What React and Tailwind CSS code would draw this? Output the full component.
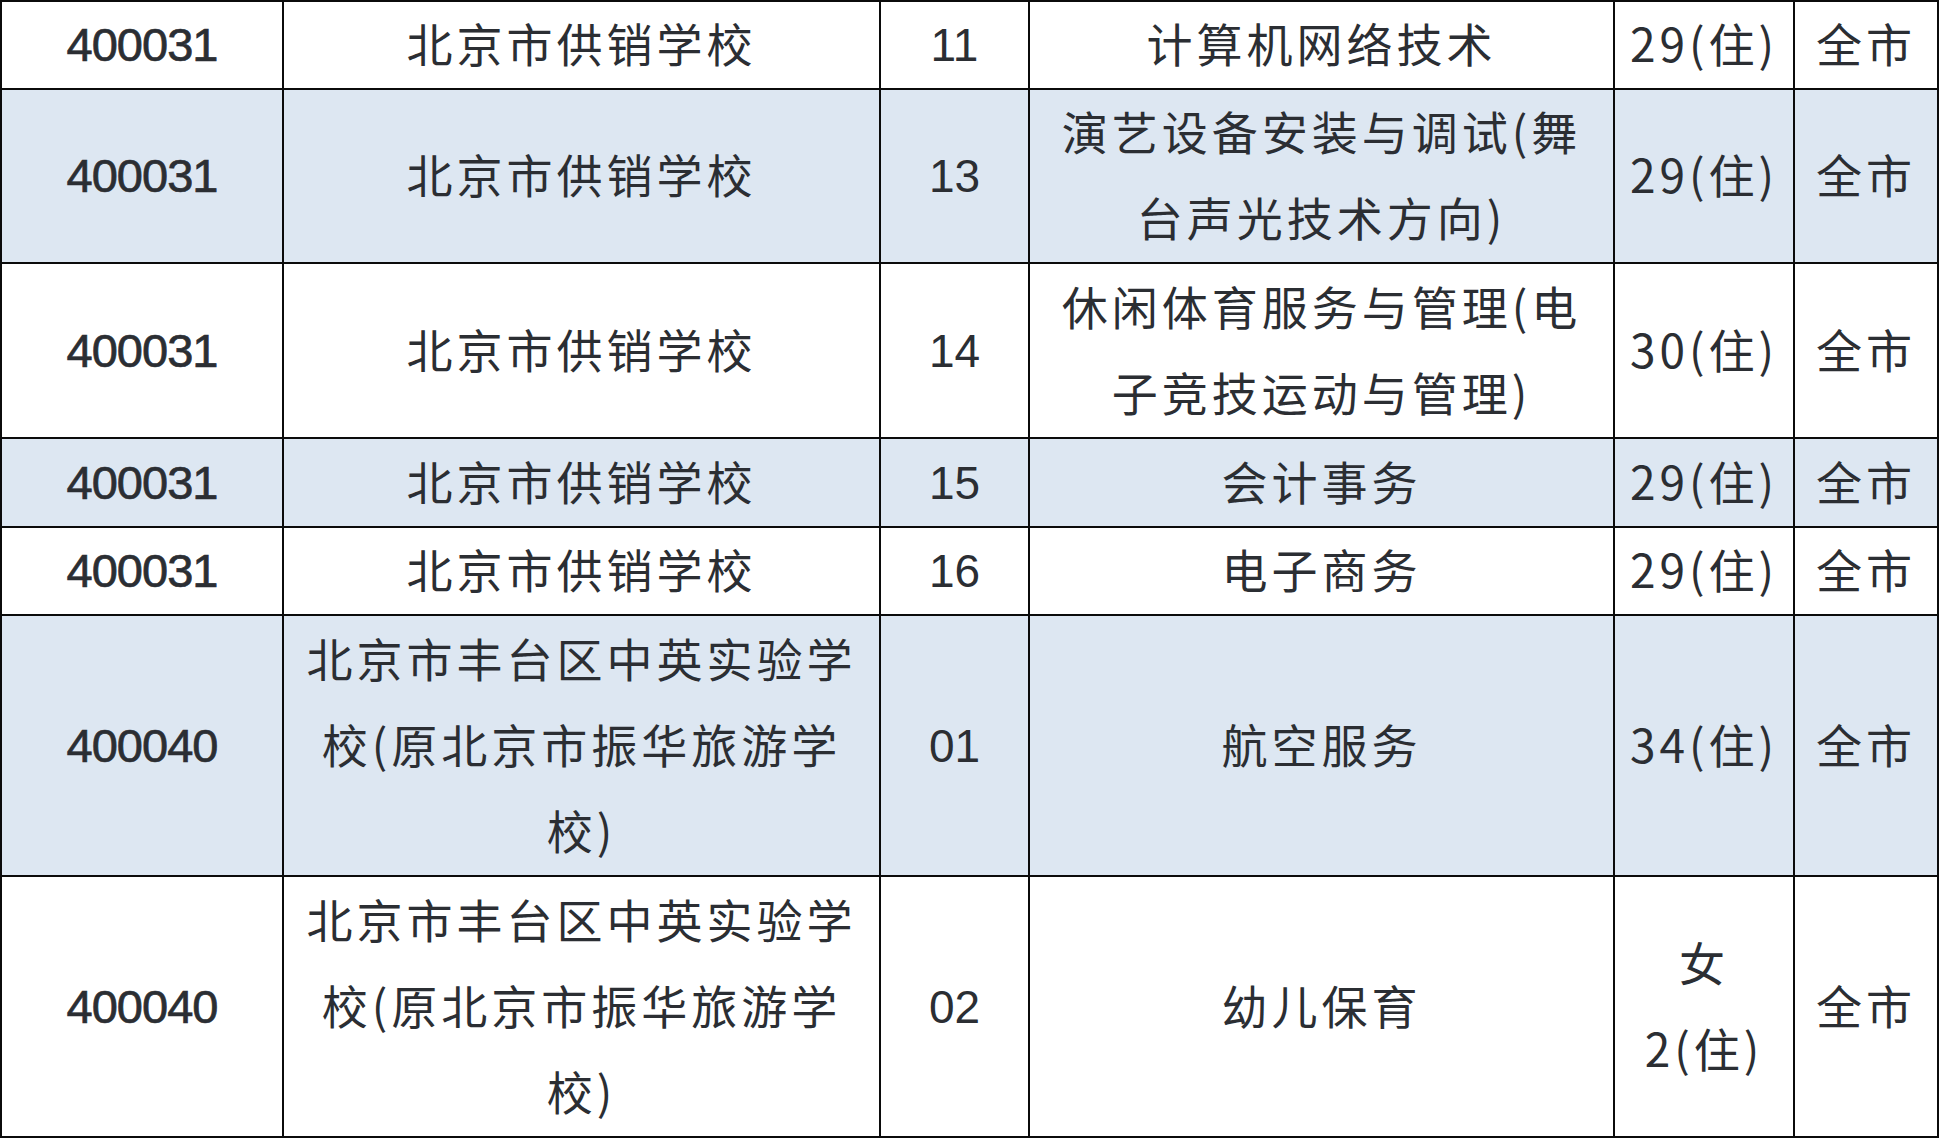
const rows = [
	{ code: "400031", school: ["北京市供销学校"], no: "11", major: ["计算机网络技术"], plan: ["29(住)"], area: "全市" },
	{ code: "400031", school: ["北京市供销学校"], no: "13", major: ["演艺设备安装与调试(舞", "台声光技术方向)"], plan: ["29(住)"], area: "全市" },
	{ code: "400031", school: ["北京市供销学校"], no: "14", major: ["休闲体育服务与管理(电", "子竞技运动与管理)"], plan: ["30(住)"], area: "全市" },
	{ code: "400031", school: ["北京市供销学校"], no: "15", major: ["会计事务"], plan: ["29(住)"], area: "全市" },
	{ code: "400031", school: ["北京市供销学校"], no: "16", major: ["电子商务"], plan: ["29(住)"], area: "全市" },
	{
		code: "400040",
		school: ["北京市丰台区中英实验学", "校(原北京市振华旅游学", "校)"],
		no: "01",
		major: ["航空服务"],
		plan: ["34(住)"],
		area: "全市",
	},
	{
		code: "400040",
		school: ["北京市丰台区中英实验学", "校(原北京市振华旅游学", "校)"],
		no: "02",
		major: ["幼儿保育"],
		plan: ["女", "2(住)"],
		area: "全市",
	},
];

// CJK cells sit a touch high in the original, hence the bottom padding
const cjk = "font-['Noto_Sans_CJK_SC','Noto_Sans',sans-serif] text-[46px] tracking-[4px] pb-[6px]";
const latin = "font-['Liberation_Sans',Arial,sans-serif] text-[46px]";

function Cell({ shaded, className, children }) {
	return (
		<div
			className={
				"flex flex-col items-center justify-center text-center whitespace-nowrap text-[#2b2e33] leading-[86px] " +
				(shaded ? "bg-[#dde7f2] " : "bg-white ") +
				className
			}
		>
			{children}
		</div>
	);
}

function Lines({ lines }) {
	return lines.map((line, j) => (
		<span key={j} className="block">
			{line}
		</span>
	));
}

export default function App() {
	return (
		<div className="grid w-[1939px] h-[1138px] bg-[#0b0b0b] gap-[2px] p-[2px] grid-cols-[280px_595px_147px_583px_178px_142px] grid-rows-[86px_172px_173px_87px_86px_259px_259px]">
			{rows.map((row, i) => {
				const shaded = i % 2 === 1;
				return [
					<Cell
						key={i + "a"}
						shaded={shaded}
						className={latin + " text-[47px] tracking-[-1px] [-webkit-text-stroke:0.7px_#2b2e33]"}
					>
						{row.code}
					</Cell>,
					<Cell key={i + "b"} shaded={shaded} className={cjk}>
						<Lines lines={row.school} />
					</Cell>,
					<Cell key={i + "c"} shaded={shaded} className={latin}>
						{row.no}
					</Cell>,
					<Cell key={i + "d"} shaded={shaded} className={cjk}>
						<Lines lines={row.major} />
					</Cell>,
					<Cell key={i + "e"} shaded={shaded} className={cjk + " tracking-[2px]"}>
						<Lines lines={row.plan} />
					</Cell>,
					<Cell key={i + "f"} shaded={shaded} className={cjk}>
						{row.area}
					</Cell>,
				];
			})}
		</div>
	);
}
